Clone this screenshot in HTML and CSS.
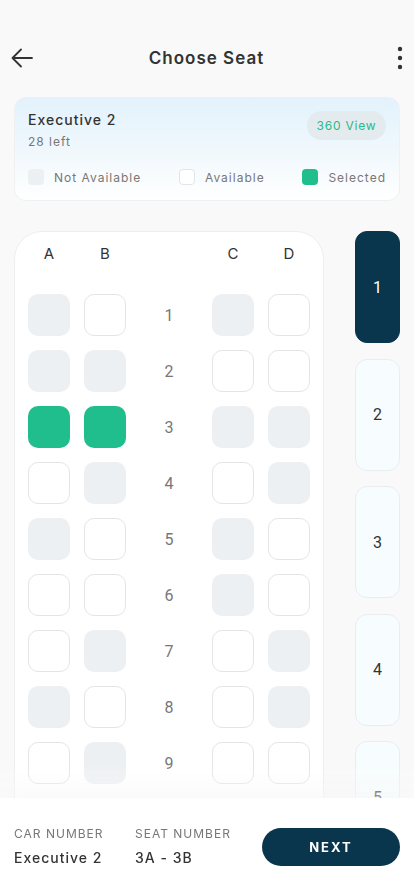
FILE: index.html
```html
<!DOCTYPE html>
<html lang="en">
<head>
    <meta charset="UTF-8">
    <meta name="viewport" content="width=device-width, initial-scale=1.0">
    <title>Choose Seat</title>
    <link rel="stylesheet" href="styles.css">
</head>
<body>
    <header class="topbar">
        <button class="icon-btn" aria-label="Back">
            <svg width="24" height="24" viewBox="0 0 24 24" fill="none" stroke="#333" stroke-width="1.8" stroke-linecap="round" stroke-linejoin="round">
                <path d="M22 12H2.5M11 3.5L2.5 12l8.5 8.5"/>
            </svg>
        </button>
        <h1>Choose Seat</h1>
        <button class="icon-btn menu" aria-label="More">
            <svg width="6" height="24" viewBox="0 0 6 24" fill="#333">
                <circle cx="3" cy="3" r="2.2"/>
                <circle cx="3" cy="12" r="2.2"/>
                <circle cx="3" cy="21" r="2.2"/>
            </svg>
        </button>
    </header>

    <section class="coach-card">
        <div class="coach-head">
            <div>
                <div class="coach-name">Executive 2</div>
                <div class="coach-left">28 left</div>
            </div>
            <span class="view-pill">360 View</span>
        </div>
        <div class="legend">
            <span class="legend-item"><i class="seat-dot taken"></i>Not Available</span>
            <span class="legend-item"><i class="seat-dot free"></i>Available</span>
            <span class="legend-item"><i class="seat-dot picked"></i>Selected</span>
        </div>
    </section>

    <main class="seat-layout">
        <div class="seat-map">
            <div class="seat-grid">
                <span class="col-label">A</span>
                <span class="col-label">B</span>
                <span class="col-label"></span>
                <span class="col-label">C</span>
                <span class="col-label">D</span>

                <div class="seat taken"></div><div class="seat free"></div><span class="row-no">1</span><div class="seat taken"></div><div class="seat free"></div>
                <div class="seat taken"></div><div class="seat taken"></div><span class="row-no">2</span><div class="seat free"></div><div class="seat free"></div>
                <div class="seat picked"></div><div class="seat picked"></div><span class="row-no">3</span><div class="seat taken"></div><div class="seat taken"></div>
                <div class="seat free"></div><div class="seat taken"></div><span class="row-no">4</span><div class="seat free"></div><div class="seat taken"></div>
                <div class="seat taken"></div><div class="seat free"></div><span class="row-no">5</span><div class="seat taken"></div><div class="seat free"></div>
                <div class="seat free"></div><div class="seat free"></div><span class="row-no">6</span><div class="seat taken"></div><div class="seat free"></div>
                <div class="seat free"></div><div class="seat taken"></div><span class="row-no">7</span><div class="seat free"></div><div class="seat taken"></div>
                <div class="seat taken"></div><div class="seat free"></div><span class="row-no">8</span><div class="seat free"></div><div class="seat taken"></div>
                <div class="seat free"></div><div class="seat taken"></div><span class="row-no">9</span><div class="seat free"></div><div class="seat free"></div>
            </div>
        </div>

        <nav class="car-list">
            <button class="car-tab active">1</button>
            <button class="car-tab">2</button>
            <button class="car-tab">3</button>
            <button class="car-tab">4</button>
            <button class="car-tab">5</button>
        </nav>
    </main>

    <footer class="summary-bar">
        <div class="summary-item">
            <div class="summary-label">CAR NUMBER</div>
            <div class="summary-value">Executive 2</div>
        </div>
        <div class="summary-item">
            <div class="summary-label">SEAT NUMBER</div>
            <div class="summary-value">3A - 3B</div>
        </div>
        <button class="next-btn">NEXT</button>
    </footer>
</body>
</html>
```

FILE: styles.css
```css
body {
    margin: 0;
    height: 896px;
    overflow: hidden;
    background-color: #f9f9f9;
    font-family: Inter, "Noto Sans", sans-serif;
    color: #333;
}
button {
    font-family: inherit;
}
.topbar {
    display: flex;
    align-items: center;
    justify-content: space-between;
    height: 42px;
    padding: 37px 12px 0 10px;
}
.topbar h1 {
    margin: 0;
    font-size: 17px;
    font-weight: 600;
    letter-spacing: 1px;
    color: #333;
}
.icon-btn {
    display: flex;
    align-items: center;
    background: none;
    border: none;
    padding: 0;
}
.menu {
    width: 24px;
    justify-content: flex-end;
    margin-right: -1px;
}

/* coach info */
.coach-card {
    margin: 18px 14px 0;
    padding: 12px 13px 15px;
    border-radius: 12px;
    border: 1px solid #eef1f3;
    background: linear-gradient(180deg, #e3f2fc 0%, #eef7fc 45%, #ffffff 100%);
}
.coach-head {
    display: flex;
    justify-content: space-between;
    align-items: flex-start;
}
.coach-name {
    font-size: 14px;
    font-weight: 500;
    letter-spacing: 1px;
    line-height: 20px;
    color: #333;
}
.coach-left {
    margin-top: 4px;
    font-size: 12px;
    letter-spacing: 1px;
    line-height: 16px;
    color: #777;
}
.view-pill {
    margin-top: 1px;
    width: 79px;
    height: 29px;
    line-height: 29px;
    text-align: center;
    border-radius: 15px;
    background-color: #e4ebee;
    color: #2bb88a;
    font-size: 12px;
    letter-spacing: 0.8px;
}
.legend {
    display: flex;
    justify-content: space-between;
    margin-top: 19px;
}
.legend-item {
    display: flex;
    align-items: center;
    gap: 10px;
    font-size: 12px;
    letter-spacing: 1px;
    color: #777;
}
.seat-dot {
    width: 16px;
    height: 16px;
    border-radius: 4px;
    box-sizing: border-box;
}

/* seat states */
.taken {
    background-color: #edf0f3;
}
.free {
    background-color: #fff;
    border: 1px solid #e2e5e7;
}
.picked {
    background-color: #1fbe8c;
}

.seat-layout {
    display: flex;
    gap: 31px;
    margin-top: 30px;
    padding: 0 14px;
}
.seat-map {
    width: 310px;
    box-sizing: border-box;
    padding: 13px 13px 60px;
    background-color: #fff;
    border: 1px solid #eeeeee;
    border-radius: 28px;
}
.seat-grid {
    display: grid;
    grid-template-columns: 42px 42px 58px 42px 42px;
    grid-template-rows: auto;
    grid-auto-rows: 42px;
    column-gap: 14px;
    row-gap: 14px;
}
.col-label {
    text-align: center;
    font-size: 15px;
    line-height: 18px;
    color: #333;
    margin-bottom: 17px;
}
.seat {
    box-sizing: border-box;
    border-radius: 10px;
}
.row-no {
    display: flex;
    align-items: center;
    justify-content: center;
    font-family: Roboto, sans-serif;
    font-size: 16px;
    color: #777;
}

/* car selector */
.car-list {
    display: flex;
    flex-direction: column;
    gap: 15.5px;
}
.car-tab {
    width: 45px;
    height: 112px;
    border-radius: 12px;
    border: 1px solid #e8eef0;
    background-color: #f7fdfe;
    font-family: Roboto, sans-serif;
    font-size: 16px;
    color: #333;
    padding: 0;
}
.car-tab.active {
    background-color: #0a364d;
    border-color: #0a364d;
    color: #fff;
}

/* bottom summary */
.summary-bar {
    position: fixed;
    left: 0;
    right: 0;
    bottom: 0;
    height: 98px;
    box-sizing: border-box;
    display: flex;
    align-items: flex-start;
    padding: 28px 14px 0;
    background-color: #fff;
    box-shadow: 0 -6px 24px rgba(0, 0, 0, 0.05);
}
.summary-bar::before {
    content: "";
    position: absolute;
    left: 0;
    right: 0;
    top: -36px;
    height: 36px;
    background: linear-gradient(180deg, rgba(255, 255, 255, 0) 0%, rgba(255, 255, 255, 0.5) 100%);
    pointer-events: none;
}
.summary-item:first-child {
    width: 121px;
}
.summary-label {
    font-size: 12px;
    line-height: 16px;
    letter-spacing: 1px;
    color: #777;
}
.summary-value {
    margin-top: 7px;
    font-size: 14px;
    font-weight: 500;
    line-height: 18px;
    letter-spacing: 1px;
    color: #333;
}
.next-btn {
    margin-left: auto;
    margin-top: 2px;
    width: 138px;
    height: 38px;
    border: none;
    border-radius: 19px;
    background-color: #0a364d;
    color: #fff;
    font-size: 13px;
    font-weight: 700;
    letter-spacing: 2px;
}
```
